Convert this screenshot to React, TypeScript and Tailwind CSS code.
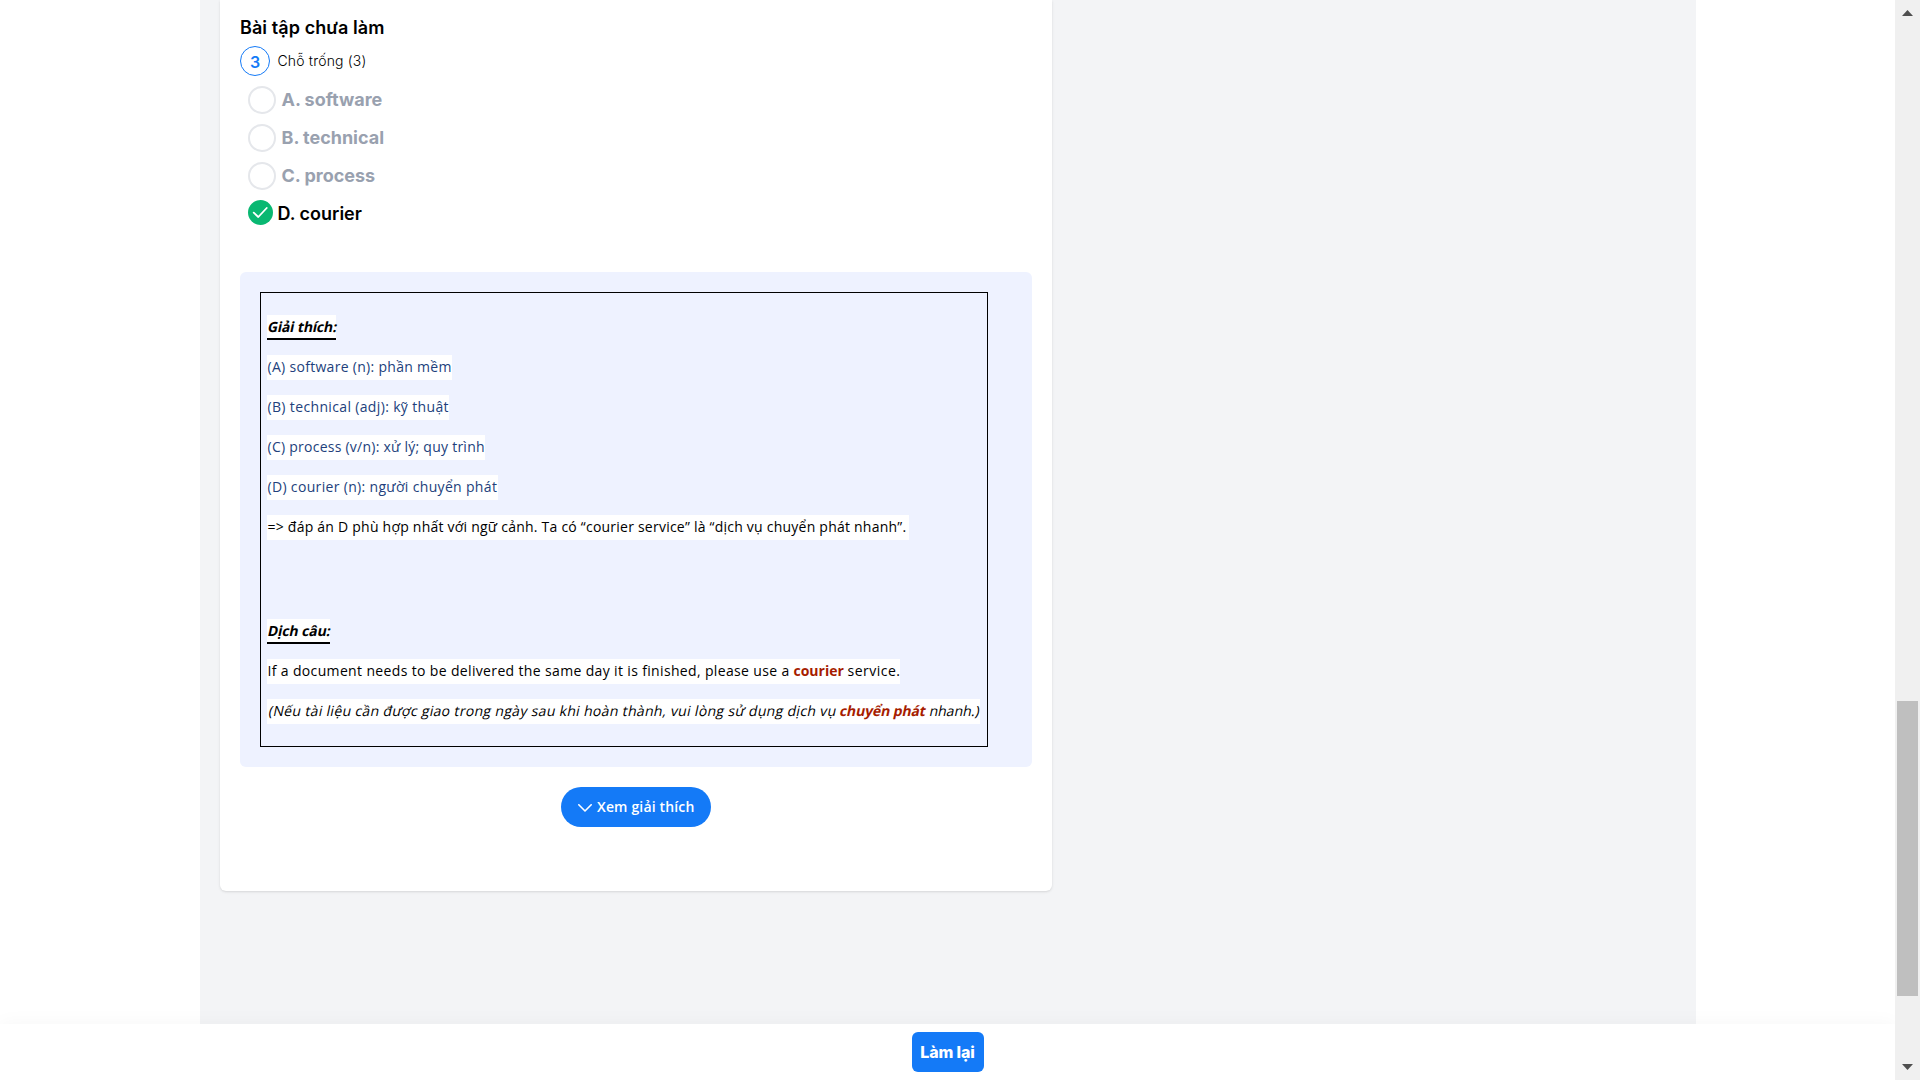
import type { ReactNode } from "react";

function Option({ label }: { label: string }) {
  return (
    <div className="flex h-7 items-center">
      <span className="h-7 w-7 rounded-full border-2 border-gray-200" />
      <span className="ml-[5.5px] text-[18px] leading-7 font-[650] tracking-[-0.02px] text-gray-400">{label}</span>
    </div>
  );
}

function Line({ width, children, className = "" }: { width: string; children: ReactNode; className?: string }) {
  return (
    <p className="flex h-[25px]">
      <span className={`flex bg-white pl-[0.5px] leading-[23px] whitespace-pre ${width} ${className}`}>{children}</span>
    </p>
  );
}

function Title({ width, children }: { width: string; children: ReactNode }) {
  return (
    <p className="flex h-[25px]">
      <span className={`border-b-2 border-black bg-white leading-[24px] whitespace-pre ${width}`}>
        <span className="ml-[0.5px] inline-block -skew-x-12 font-bold">{children}</span>
      </span>
    </p>
  );
}

export default function App() {
  return (
    <div className="flex h-[1080px] w-[1920px] overflow-hidden bg-white font-['Inter',sans-serif] text-black">
      <div className="flex w-[1895px] flex-col">
        <main className="ml-[200px] h-[1024px] w-[1496px] bg-gray-100 pl-5">
          <section className="flex h-[891px] w-[832px] flex-col rounded-b-md bg-white px-5 pt-[14px] shadow">
            <h2 className="text-[18px] leading-7 font-semibold tracking-[0.08px]">Bài tập chưa làm</h2>
            <div className="mt-1 flex h-[30px] items-center">
              <span className="flex h-[30px] w-[30px] items-center justify-center rounded-full border border-[#147af7] pt-0.5 text-base font-semibold text-[#147af7]">
                3
              </span>
              <span className="ml-[7.5px] text-sm font-light tracking-[0.17px]">Chỗ trống (3)</span>
            </div>
            <div className="mt-[10px] ml-2 flex flex-col gap-[10px]">
              <Option label="A. software" />
              <Option label="B. technical" />
              <Option label="C. process" />
              <div className="flex h-7 items-start">
                <svg viewBox="0 0 25 25" className="h-[25px] w-[25px]">
                  <circle cx="12.5" cy="12.5" r="12.5" fill="#09b872" />
                  <path d="M5.7 12.6l4.6 4.4 8.4-9" fill="none" stroke="#fff" strokeWidth="1.8" strokeLinecap="round" strokeLinejoin="round" />
                </svg>
                <span className="ml-[4.5px] text-[18px] leading-7 font-semibold">D. courier</span>
              </div>
            </div>

            <div className="mt-[44px] h-[495px] rounded-md bg-[#eef2ff] p-5">
              <div className="flex h-[455px] w-[728px] flex-col gap-[15px] border border-black pt-[22px] pl-1.5 font-['Open_Sans','Noto_Sans',sans-serif] text-[14px]">
                <Title width="w-[69px] tracking-[-0.15px]">Giải thích:</Title>
                <Line width="w-[185px]" className="tracking-[0.3px] text-[#223f7c]">(A) software (n): phần mềm</Line>
                <Line width="w-[182px]" className="tracking-[0.35px] text-[#223f7c]">(B) technical (adj): kỹ thuật</Line>
                <Line width="w-[218px]" className="tracking-[0.25px] text-[#223f7c]">(C) process (v/n): xử lý; quy trình</Line>
                <Line width="w-[231px]" className="tracking-[0.33px] text-[#223f7c]">(D) courier (n): người chuyển phát</Line>
                <Line width="w-[642px]" className="tracking-[0.23px]">
                  {"=> đáp án D phù hợp nhất với ngữ cảnh. Ta có “courier service” là “dịch vụ chuyển phát nhanh”."}
                </Line>
                <div className="h-[49px]" />
                <Title width="w-[63px] tracking-[-0.08px]">Dịch câu:</Title>
                <Line width="w-[633px]">
                  <span className="w-[526px] tracking-[0.35px]">
                    If a document needs to be delivered the same day it is finished, please use a{" "}
                  </span>
                  <b className="w-[50px] text-[#a61c00]">courier</b>
                  <span className="tracking-[0.48px]"> service.</span>
                </Line>
                <Line width="w-[713px]">
                  <span className="w-[573px] -skew-x-12 pl-px tracking-[0.33px]">
                    (Nếu tài liệu cần được giao trong ngày sau khi hoàn thành, vui lòng sử dụng dịch vụ{" "}
                  </span>
                  <b className="w-[86px] -skew-x-12 tracking-[-0.15px] text-[#a61c00]">chuyển phát</b>
                  <span className="-skew-x-12"> nhanh.)</span>
                </Line>
              </div>
            </div>

            <button className="mt-5 flex h-10 w-[150px] items-center self-center rounded-full bg-[#147af7] pl-[17px] text-white">
              <svg viewBox="0 0 14 8" className="mt-0.5 h-2 w-3.5">
                <path d="M.8 .8L7 7 13.2 .8" fill="none" stroke="currentColor" strokeWidth="1.6" strokeLinecap="round" strokeLinejoin="round" />
              </svg>
              <span className="ml-[5px] pb-0.5 font-['Open_Sans',sans-serif] text-[14px] font-semibold tracking-[0.16px] whitespace-nowrap">
                Xem giải thích
              </span>
            </button>
          </section>
        </main>
        <footer className="z-10 flex h-14 items-center justify-center bg-white shadow-[0_0_20px_rgba(0,0,0,0.04)]">
          <button className="h-10 w-[72px] rounded-md bg-[#147af7] text-base font-extrabold tracking-[-0.1px] whitespace-nowrap text-white">
            Làm lại
          </button>
        </footer>
      </div>
      <div className="z-20 flex w-[25px] flex-col items-center bg-[#f0f0f0]">
        <svg viewBox="0 0 11 6" className="mt-[10px] h-1.5 w-[11px]">
          <path d="M0 6L5.5 0 11 6z" fill="#4f4f4f" />
        </svg>
        <div className="mt-[685px] h-[295px] w-[21px] bg-[#bfbfbf]" />
        <svg viewBox="0 0 11 6" className="mt-[68px] h-1.5 w-[11px]">
          <path d="M0 0L5.5 6 11 0z" fill="#4f4f4f" />
        </svg>
      </div>
    </div>
  );
}
